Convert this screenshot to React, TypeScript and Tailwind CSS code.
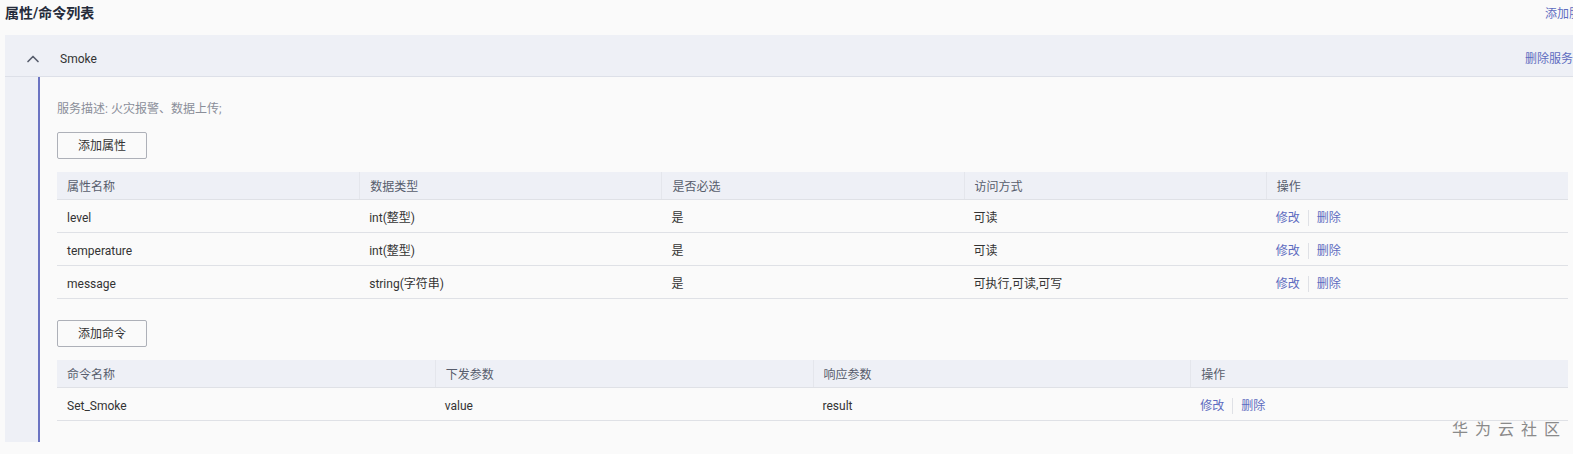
import { ChevronUp } from 'lucide-react';

const propCols = ['属性名称', '数据类型', '是否必选', '访问方式', '操作'];
const props = [
  ['level', 'int(整型)', '是', '可读'],
  ['temperature', 'int(整型)', '是', '可读'],
  ['message', 'string(字符串)', '是', '可执行,可读,可写'],
];
const cmdCols = ['命令名称', '下发参数', '响应参数', '操作'];
const cmds = [['Set_Smoke', 'value', 'result']];

function Actions() {
  return (
    <div className="flex items-center text-[#5e6cc0]">
      <span>修改</span>
      <span className="mx-2 h-4 w-px bg-[#dfe1e6]" />
      <span>删除</span>
    </div>
  );
}

function Table({ cols, rows }: { cols: string[]; rows: string[][] }) {
  const grid = cols.length === 5 ? 'grid-cols-5' : 'grid-cols-4';
  return (
    <div className="w-[1511px] text-[12px] text-[#333]">
      <div className={`grid ${grid} h-[28px] items-center bg-[#eef0f6] border-b border-[#dfe1e6]`}>
        {cols.map((c, i) => (
          <div key={c} className={`h-full flex items-center px-[10px] pt-[2px] text-[#575d6c] ${i > 0 ? 'border-l border-[#e4e6ec]' : ''}`}>
            {c}
          </div>
        ))}
      </div>
      {rows.map((r) => (
        <div key={r[0]} className={`grid ${grid} h-[33px] items-center border-b border-[#dfe1e6]`}>
          {r.map((v, i) => (
            <div key={i} className="px-[10px] pt-[4px]">{v}</div>
          ))}
          <div className="px-[10px] pt-[4px]"><Actions /></div>
        </div>
      ))}
    </div>
  );
}

export default function App() {
  return (
    <div
      className="w-[1573px] h-[454px] overflow-hidden bg-[#fafafa] relative"
      style={{ fontFamily: 'Roboto, "Noto Sans CJK SC", sans-serif' }}
    >
      <div className="w-[1600px]">
        <div className="flex items-center justify-between h-[27px] pl-[5px] pr-[7px]">
          <span className="text-[14px] font-bold text-[#252b3a]">属性/命令列表</span>
          <span className="text-[12px] text-[#5e6cc0]">添加服务</span>
        </div>
        <div className="ml-[5px] mt-[8px] bg-[#eef0f6]">
          <div className="flex items-center justify-between h-[42px] pt-[6px] border-b border-[#dde0e8] pl-[18px] pr-[27px]">
            <div className="flex items-center text-[12px] text-[#333]">
              <ChevronUp size={20} strokeWidth={2} className="text-[#575d6c]" />
              <span className="ml-[17px]">Smoke</span>
            </div>
            <span className="text-[12px] text-[#5e6cc0]">删除服务</span>
          </div>
          <div className="flex">
            <div className="w-[33px] shrink-0" />
            <div className="w-[2px] bg-[#6b74c2] shrink-0" />
            <div className="flex-1 bg-[#fafafa] pl-[17px] pt-[23px] pb-[21px]">
              <div className="text-[12px] text-[#8a8e99] h-[18px] leading-[18px]">服务描述: 火灾报警、数据上传;</div>
              <button className="mt-[14px] w-[90px] h-[27px] border border-[#adb0b8] rounded-[2px] bg-[#fafafa] text-[12px] text-[#333]">
                添加属性
              </button>
              <div className="mt-[13px]">
                <Table cols={propCols} rows={props} />
              </div>
              <button className="mt-[21px] w-[90px] h-[27px] border border-[#adb0b8] rounded-[2px] bg-[#fafafa] text-[12px] text-[#333]">
                添加命令
              </button>
              <div className="mt-[13px]">
                <Table cols={cmdCols} rows={cmds} />
              </div>
            </div>
          </div>
        </div>
      </div>
      <div className="absolute left-[1452px] top-[418px] text-[16px] tracking-[7px] text-[#8a8a8a]">华为云社区</div>
    </div>
  );
}
